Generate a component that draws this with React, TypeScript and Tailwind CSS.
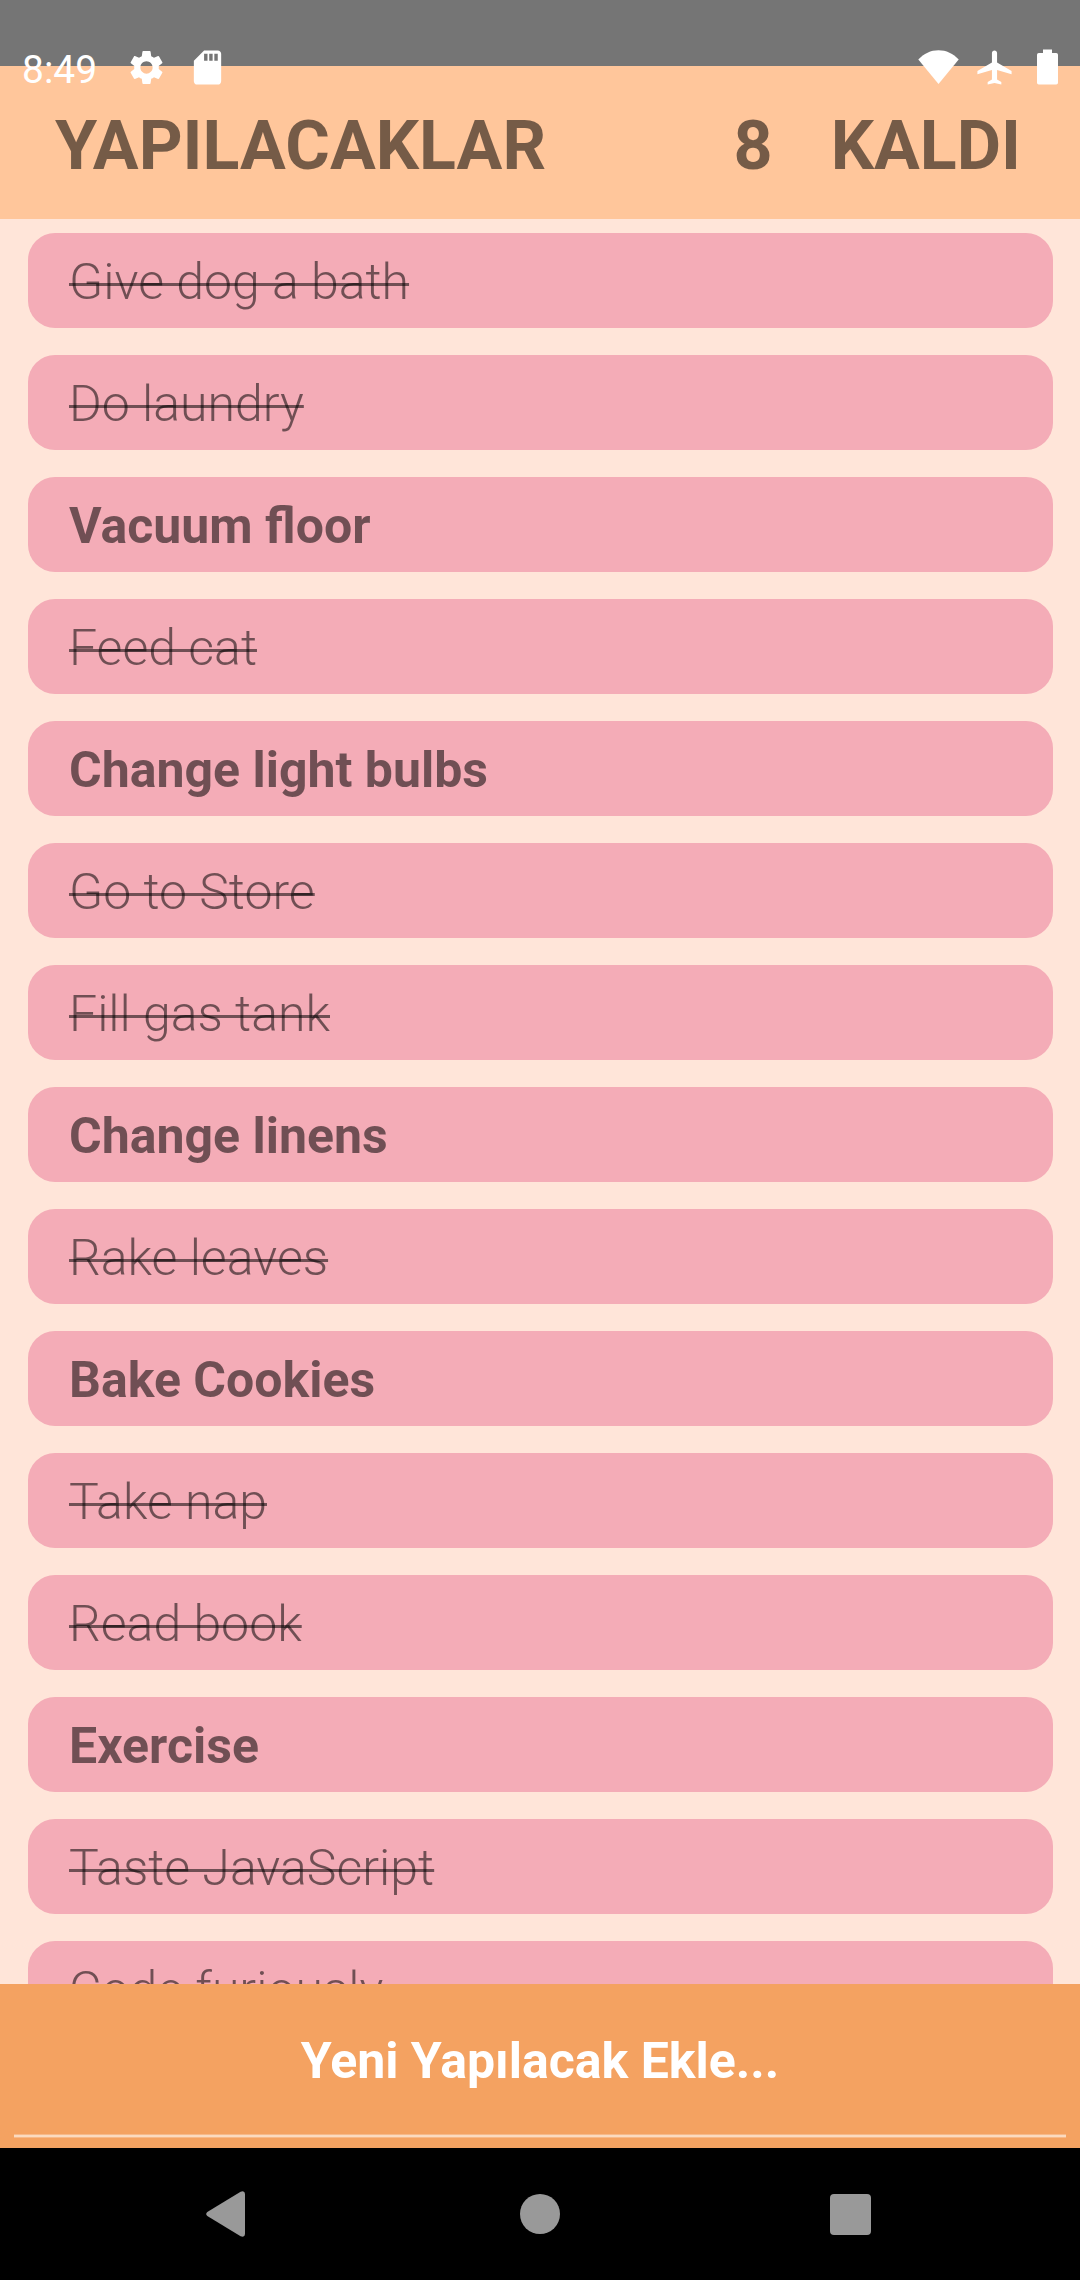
import React from "react";
import { MdSettings, MdSdCard, MdAirplanemodeActive } from "react-icons/md";

type Todo = { title: string; done: boolean };

const todos: Todo[] = [
  { title: "Give dog a bath", done: true },
  { title: "Do laundry", done: true },
  { title: "Vacuum floor", done: false },
  { title: "Feed cat", done: true },
  { title: "Change light bulbs", done: false },
  { title: "Go to Store", done: true },
  { title: "Fill gas tank", done: true },
  { title: "Change linens", done: false },
  { title: "Rake leaves", done: true },
  { title: "Bake Cookies", done: false },
  { title: "Take nap", done: true },
  { title: "Read book", done: true },
  { title: "Exercise", done: false },
  { title: "Taste JavaScript", done: true },
  { title: "Code furiously", done: true },
];

function StatusBar() {
  return (
    <div className="absolute inset-x-0 top-0 flex h-[134px] items-center pr-[22px] pl-[22px] text-white">
      <span className="w-[74px] pt-[6px] text-[39px] leading-[46px]">8:49</span>
      <MdSettings className="ml-[30px] size-[41px]" />
      <MdSdCard className="ml-[20px] size-[41px]" />
      <svg className="ml-auto h-[34px] w-[41px]" viewBox="0 0 41 34" fill="currentColor">
        <path d="M0.3 9.6C5.8 3.6 12.8 0.3 20.5 0.3S35.2 3.6 40.7 9.6L20.5 34Z" />
      </svg>
      <MdAirplanemodeActive className="ml-[15px] size-[41px]" />
      <svg className="ml-[22px] h-[36px] w-[21px]" viewBox="0 0 21 36" fill="currentColor">
        <path d="M6 0.5h9V4h4.2A1.8 1.8 0 0 1 21 5.8V33.7a1.8 1.8 0 0 1-1.8 1.8H1.8A1.8 1.8 0 0 1 0 33.7V5.8A1.8 1.8 0 0 1 1.8 4H6Z" />
      </svg>
    </div>
  );
}

function TodoRow({ todo }: { todo: Todo }) {
  return (
    <li className="h-[95px] shrink-0 rounded-[27px] bg-[#f4acb7] pt-[20px] pl-[41px] text-[50px] leading-[58px] text-black/54">
      {todo.done ? (
        <span className="font-light underline decoration-[3px] underline-offset-[-16px] [text-decoration-skip-ink:none]">
          {todo.title}
        </span>
      ) : (
        <span className="font-bold">{todo.title}</span>
      )}
    </li>
  );
}

function NavBar() {
  return (
    <nav className="flex h-[132px] shrink-0 items-center bg-black text-[#999999]">
      <svg className="ml-[206px] h-[46px] w-[39px]" viewBox="0 0 39 46" fill="currentColor">
        <path d="M1.3 20.9 34.6 0.8Q38.8-0.8 39 3V43Q38.8 46.8 34.6 45.2L1.3 25.1Q-0.9 23 1.3 20.9Z" />
      </svg>
      <span className="ml-[275px] size-[40px] rounded-full bg-[#999999]" />
      <span className="ml-[270px] size-[41px] rounded-[4px] bg-[#999999]" />
    </nav>
  );
}

export default function App() {
  return (
    <div className="relative flex h-[2280px] w-[1080px] flex-col overflow-hidden bg-[#ffe5d9] font-['Roboto',sans-serif]">
      <div className="h-[66px] shrink-0 bg-[#757575]" />
      <StatusBar />
      <header className="flex h-[153px] shrink-0 items-start bg-[#ffc69b] pt-[40px] pr-[59px] pl-[55px] text-[68.2px] leading-[80px] font-bold text-black/54">
        <h1>YAPILACAKLAR</h1>
        <span className="ml-auto">8</span>
        <span className="ml-[58px]">KALDI</span>
      </header>
      <ul className="flex min-h-0 flex-1 flex-col gap-[27px] overflow-hidden pt-[14px] pr-[27px] pl-[28px]">
        {todos.map((todo) => (
          <TodoRow key={todo.title} todo={todo} />
        ))}
      </ul>
      <footer className="flex h-[164px] shrink-0 flex-col bg-[#f4a261] px-[14px] pb-[10px]">
        <div className="flex-1 pt-[48px] text-center text-[50px] leading-[58px] font-bold text-white">
          Yeni Yapılacak Ekle...
        </div>
        <div className="h-[4px] border-y border-[#f7b988] bg-[#fbdabf]" />
      </footer>
      <NavBar />
    </div>
  );
}
